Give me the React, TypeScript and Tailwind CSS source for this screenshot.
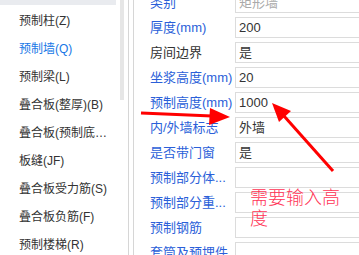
import React from 'react';

const FONT = { fontFamily: '"Liberation Sans", "Noto Sans CJK SC", sans-serif' };

const menu = [
  { label: '预制柱(Z)' },
  { label: '预制墙(Q)', active: true },
  { label: '预制梁(L)' },
  { label: '叠合板(整厚)(B)' },
  { label: '叠合板(预制底板)(YB)' },
  { label: '板缝(JF)' },
  { label: '叠合板受力筋(S)' },
  { label: '叠合板负筋(F)' },
  { label: '预制楼梯(R)' },
];

type Prop = { name: string; value: string; blue?: boolean; muted?: boolean };

const props: Prop[] = [
  { name: '类别', value: '矩形墙', blue: true, muted: true },
  { name: '厚度(mm)', value: '200', blue: true },
  { name: '房间边界', value: '是' },
  { name: '坐浆高度(mm)', value: '20', blue: true },
  { name: '预制高度(mm)', value: '1000', blue: true },
  { name: '内/外墙标志', value: '外墙', blue: true },
  { name: '是否带门窗', value: '是', blue: true },
  { name: '预制部分体...', value: '', blue: true },
  { name: '预制部分重...', value: '', blue: true },
  { name: '预制钢筋', value: '', blue: true },
  { name: '套筒及预埋件', value: '', blue: true },
];

export default function App(): React.JSX.Element {
  return (
    <div className="relative flex h-[255px] w-[359px] overflow-hidden bg-white" style={FONT}>
      {/* component tree */}
      <div className="w-[120px] shrink-0">
        <div className="h-[5px] w-[116px] bg-[#e9ebef]" />
        <ul className="pt-[2px]">
          {menu.map((m) => (
            <li
              key={m.label}
              className={`h-[28px] truncate pl-[19px] pr-[2px] text-[12px] leading-[28px] ${
                m.active ? 'text-[#1677e6]' : 'text-[#333]'
              }`}
            >
              {m.label}
            </li>
          ))}
        </ul>
      </div>

      {/* scrollbar */}
      <div className="w-[4px] shrink-0">
        <div className="h-[100px] bg-[#e6e6e6]" />
      </div>

      <div className="ml-[4px] w-[1px] shrink-0 bg-[#d6d6d6]" />
      <div className="ml-[4px] w-[1px] shrink-0 bg-[#d6d6d6]" />

      {/* property grid */}
      <div className="flex-1 pl-[16px]">
        <div className="-mt-[8px] flex flex-col gap-[4px]">
          {props.map((p) => (
            <div key={p.name} className="flex h-[21px] items-center">
              <span
                className={`w-[85px] shrink-0 truncate text-[13px] ${
                  p.blue ? 'text-[#2b5fd9]' : 'text-[#333]'
                }`}
              >
                {p.name}
              </span>
              <div
                className={`flex h-[21px] w-[160px] shrink-0 items-center border border-[#dcdcdc] bg-white pl-[3px] text-[13px] ${
                  p.muted ? 'text-[#aaa]' : 'text-[#333]'
                }`}
              >
                {p.value}
              </div>
            </div>
          ))}
        </div>
      </div>

      {/* annotations */}
      <svg className="pointer-events-none absolute left-0 top-0" width="359" height="255">
        <line x1="141" y1="113" x2="212" y2="116" stroke="#f00" strokeWidth="3" />
        <polygon points="230,117 210,108 209,125" fill="#f00" />
        <line x1="333" y1="171" x2="284" y2="116" stroke="#f00" strokeWidth="3" />
        <polygon points="272,103 279,122 291,111" fill="#f00" />
      </svg>
      <div className="pointer-events-none absolute left-[250px] top-[188px] w-[95px] text-[18px] font-light leading-[21px] text-[#ff3355]">
        需要输入高度
      </div>
    </div>
  );
}
